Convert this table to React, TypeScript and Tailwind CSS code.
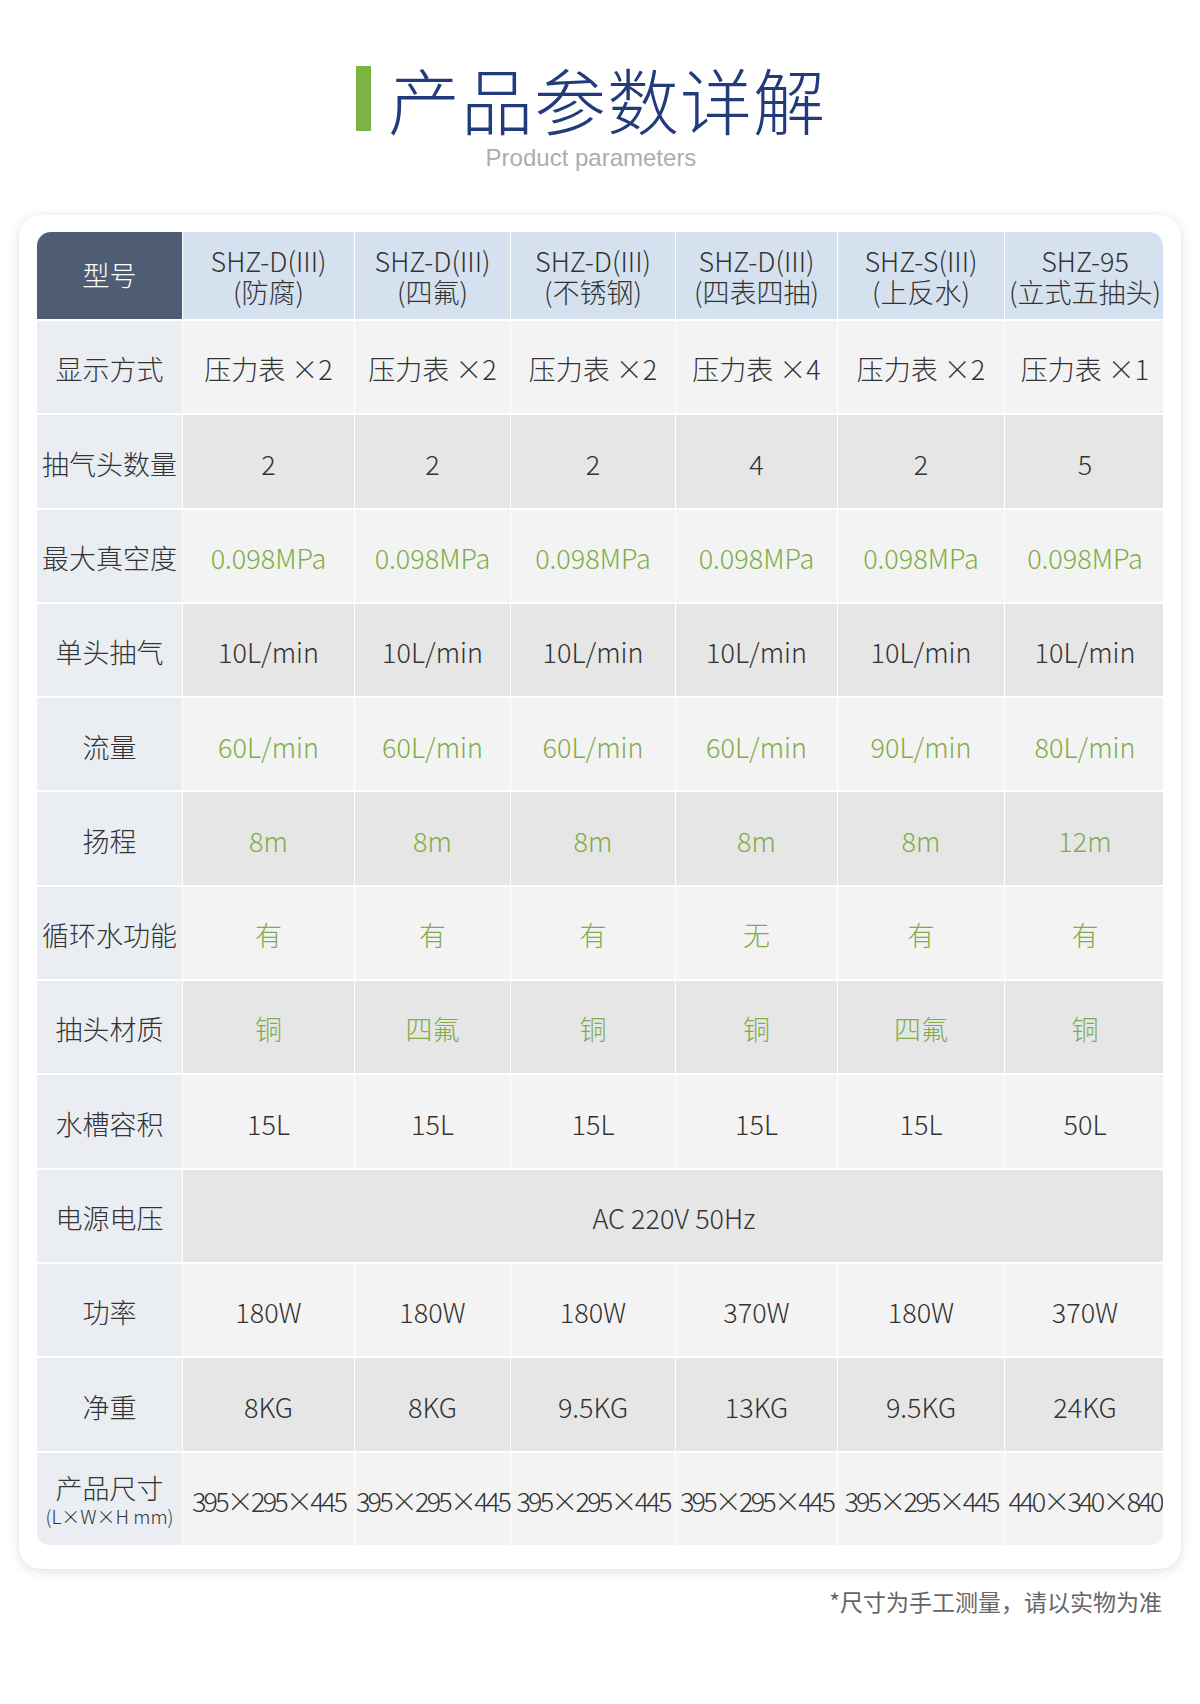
import React from "react";

const models = [
  ["SHZ-D(III)", "(防腐)"],
  ["SHZ-D(III)", "(四氟)"],
  ["SHZ-D(III)", "(不锈钢)"],
  ["SHZ-D(III)", "(四表四抽)"],
  ["SHZ-S(III)", "(上反水)"],
  ["SHZ-95", "(立式五抽头)"],
];

type Row = { label: string; values: string[]; green?: boolean; span?: boolean };

const rows: Row[] = [
  { label: "显示方式", values: ["压力表 ×2", "压力表 ×2", "压力表 ×2", "压力表 ×4", "压力表 ×2", "压力表 ×1"] },
  { label: "抽气头数量", values: ["2", "2", "2", "4", "2", "5"] },
  { label: "最大真空度", values: Array(6).fill("0.098MPa"), green: true },
  { label: "单头抽气", values: Array(6).fill("10L/min") },
  { label: "流量", values: ["60L/min", "60L/min", "60L/min", "60L/min", "90L/min", "80L/min"], green: true },
  { label: "扬程", values: ["8m", "8m", "8m", "8m", "8m", "12m"], green: true },
  { label: "循环水功能", values: ["有", "有", "有", "无", "有", "有"], green: true },
  { label: "抽头材质", values: ["铜", "四氟", "铜", "铜", "四氟", "铜"], green: true },
  { label: "水槽容积", values: ["15L", "15L", "15L", "15L", "15L", "50L"] },
  { label: "电源电压", values: ["AC 220V 50Hz"], span: true },
  { label: "功率", values: ["180W", "180W", "180W", "370W", "180W", "370W"] },
  { label: "净重", values: ["8KG", "8KG", "9.5KG", "13KG", "9.5KG", "24KG"] },
];

const dims = ["395×295×445", "395×295×445", "395×295×445", "395×295×445", "395×295×445", "440×340×840"];

export default function App() {
  return (
    <div className="w-[1200px] h-[1704px] bg-white font-['Noto_Sans_CJK_SC',sans-serif] text-[#333]">
      <div className="flex flex-col items-center pt-[58px] pr-[18px]">
        <div className="flex items-center gap-[17px]">
          <div className="w-[15px] h-[65px] bg-[#7db343]" />
          <h1 className="font-['Noto_Sans_CJK_SC_Light','Noto_Sans_CJK_SC',sans-serif] text-[72px] font-light leading-[80px] tracking-[1px] text-[#223b7d]">
            产品参数详解
          </h1>
        </div>
        <p className="mt-[6px] font-['Liberation_Sans',sans-serif] text-[24px] leading-[28px] text-[#adadad]">
          Product parameters
        </p>
      </div>

      <div className="mx-[19px] mt-[43px] rounded-[22px] bg-white px-[18px] pt-[17px] pb-[24px] shadow-[0_2px_12px_rgba(0,0,0,0.13)]">
        <div className="grid grid-cols-[145px_171px_155px_164px_161px_166px_160px] gap-x-px gap-y-[2px] overflow-hidden rounded-t-[14px] rounded-b-[12px] bg-white text-[27px] font-light">
          <div className="flex h-[87px] items-center justify-center bg-[#4f5d74] text-white">型号</div>
          {models.map(([a, b], i) => (
            <div key={i} className="flex h-[87px] flex-col items-center justify-center whitespace-nowrap bg-[#d5e1ef] leading-[31px]">
              <span>{a}</span>
              <span>{b}</span>
            </div>
          ))}

          {rows.map((row, r) => {
            const bg = r % 2 === 0 ? "bg-[#f3f3f3]" : "bg-[#e6e6e6]";
            const color = row.green ? "text-[#80ad48]" : "text-[#333]";
            return (
              <React.Fragment key={row.label}>
                <div className="flex h-[92.3px] items-center justify-center bg-[#eaeef3] pt-[5px] whitespace-nowrap">{row.label}</div>
                {row.span ? (
                  <div className={`col-span-6 flex h-[92.3px] items-center justify-center pt-[5px] ${bg} ${color}`}>{row.values[0]}</div>
                ) : (
                  row.values.map((v, i) => (
                    <div key={i} className={`flex h-[92.3px] items-center justify-center pt-[5px] whitespace-nowrap ${bg} ${color}`}>
                      {v}
                    </div>
                  ))
                )}
              </React.Fragment>
            );
          })}

          <div className="flex h-[92.3px] flex-col items-center justify-center bg-[#eaeef3] pt-[4px]">
            <span className="leading-[30px]">产品尺寸</span>
            <span className="text-[19px] leading-[26px]">(L×W×H mm)</span>
          </div>
          {dims.map((d, i) => (
            <div key={i} className="flex h-[92.3px] items-center justify-center whitespace-nowrap bg-[#f3f3f3] pt-[5px] tracking-[-2.8px]">
              {d}
            </div>
          ))}
        </div>
      </div>

      <p className="mt-[17px] pr-[38px] text-right text-[23px] leading-[30px] text-[#666]">*尺寸为手工测量，请以实物为准</p>
    </div>
  );
}
